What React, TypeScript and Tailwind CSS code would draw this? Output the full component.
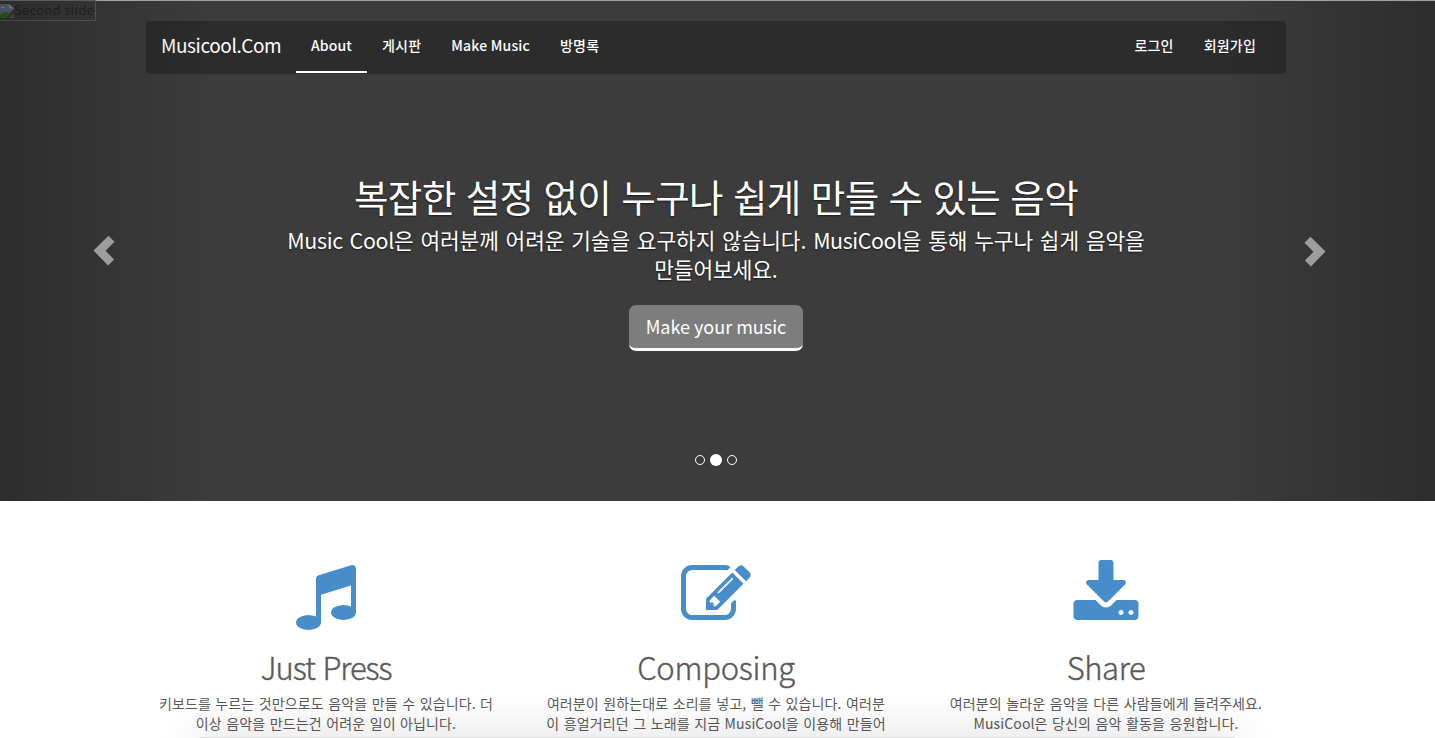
import type { ReactNode } from 'react';

const MUSIC =
  'M1664 224v1120q0 50-34 89t-86 60.5-103.5 32-96.5 10.5-96.5-10.5-103.5-32-86-60.5-34-89 34-89 86-60.5 103.5-32 96.5-10.5q105 0 192 39v-537l-768 237v709q0 50-34 89t-86 60.5-103.5 32-96.5 10.5-96.5-10.5-103.5-32-86-60.5-34-89 34-89 86-60.5 103.5-32 96.5-10.5q105 0 192 39v-967q0-31 19-56.5t49-35.5l832-256q12-4 28-4 40 0 68 28t28 68z';
const EDIT =
  'M888 1184l116-116-152-152-116 116v56h96v96h56zm440-720q-16-16-33 1l-350 350q-17 17-1 33t33-1l350-350q17-17 1-33zm80 594v190q0 119-84.5 203.5t-203.5 84.5h-832q-119 0-203.5-84.5t-84.5-203.5v-832q0-119 84.5-203.5t203.5-84.5h832q63 0 117 25 15 7 18 23 3 17-9 29l-49 49q-14 14-32 8-23-6-45-6h-832q-66 0-113 47t-47 113v832q0 66 47 113t113 47h832q66 0 113-47t47-113v-126q0-13 9-22l64-64q15-15 35-7t20 29zm-96-738l288 288-672 672h-288v-288zm444 132l-92 92-288-288 92-92q28-28 68-28t68 28l152 152q28 28 28 68t-28 68z';
const DOWNLOAD =
  'M1344 1344q0-26-19-45t-45-19-45 19-19 45 19 45 45 19 45-19 19-45zm256 0q0-26-19-45t-45-19-45 19-19 45 19 45 45 19 45-19 19-45zm128-224v320q0 40-28 68t-68 28h-1472q-40 0-68-28t-28-68v-320q0-40 28-68t68-28h465l135 136q58 56 136 56t136-56l136-136h464q40 0 68 28t28 68zm-325-569q17 41-14 70l-448 448q-18 19-45 19t-45-19l-448-448q-31-29-14-70 17-39 59-39h256v-448q0-26 19-45t45-19h256q26 0 45 19t19 45v448h256q42 0 59 39z';

function NavLink({ children, active = false }: { children: ReactNode; active?: boolean }) {
  return (
    <a
      className={
        active
          ? 'flex h-[52px] w-[71px] items-center border-b-2 border-white px-[15px] pb-px tracking-[0.1px]'
          : 'flex h-[52px] items-center border-b-2 border-transparent px-[15px] pb-px tracking-[0.2px]'
      }
    >
      {children}
    </a>
  );
}

function BrokenImage() {
  return (
    <div className="absolute left-[-1px] top-[-1px] flex h-[21px] w-[97px] items-center border border-[#5c5c5c] text-[13px] leading-[18px] text-[#262626]">
      <svg className="h-4 w-[14px] shrink-0" viewBox="0 0 14 16">
        <path d="M0 1h9l5 4.500L5.500 15H0z" fill="#626b84" />
        <path d="M9 1v4.500h5z" fill="#8a8e8d" />
        <path d="M0 12q5-5 9-1.500L5.500 15H0z" fill="#2f6a22" />
        <path d="M1 5q2-3 4 0z" fill="#a09e90" />
        <path d="M9 15l5-5v5z" fill="#3c6a34" />
      </svg>
      <span className="whitespace-nowrap pb-px tracking-[0.3px]">Second slide</span>
    </div>
  );
}

function Chevron({ flip = false }: { flip?: boolean }) {
  return (
    <svg
      className={flip ? 'h-[31px] w-[22px] -scale-x-100' : 'h-[31px] w-[22px]'}
      viewBox="0 0 22 31"
    >
      <path d="M15.5 0.8l6 6-9 9 8.6 8.6-6 6L0.5 15.5z" fill="#9d9d9d" />
    </svg>
  );
}

function Feature({
  icon,
  title,
  lines,
}: {
  icon: string;
  title: ReactNode;
  lines: string[];
}) {
  return (
    <section className="flex w-[390px] flex-col items-center text-[#5a5a5a]">
      <svg className="h-[70px] w-[70px] fill-[#468dc9]" viewBox="0 0 1792 1792">
        <path d={icon} />
      </svg>
      <h2 className="mt-[20px] text-[31px] font-light leading-[34px] [-webkit-text-stroke:0.4px_#5a5a5a]">
        {title}
      </h2>
      <div className="mt-[9px] text-center text-[14px] leading-5 tracking-[0.12px] [word-spacing:1.2px]">
        {lines.map((line) => (
          <p key={line} className="whitespace-nowrap">
            {line}
          </p>
        ))}
      </div>
    </section>
  );
}

export default function App() {
  return (
    <div className="relative h-[738px] w-[1435px] overflow-hidden bg-white font-['Noto_Sans_CJK_KR',sans-serif]">
      <header className="relative h-[501px] border-t border-[#a0a3a1] bg-[#3c3c3c]">
        <BrokenImage />
        <div className="flex w-[1432px] flex-col items-center pt-5">
          <nav className="flex h-[53px] w-[1140px] rounded bg-[#2c2c2c] text-[14px] font-medium text-white">
            <a className="flex h-[49px] w-[150px] items-center px-[15px] text-[19px] font-normal tracking-[-0.42px]">
              Musicool.Com
            </a>
            <NavLink active>About</NavLink>
            <NavLink>게시판</NavLink>
            <NavLink>Make Music</NavLink>
            <NavLink>방명록</NavLink>
            <div className="ml-auto flex pr-[15px]">
              <NavLink>로그인</NavLink>
              <NavLink>회원가입</NavLink>
            </div>
          </nav>
          <div className="mt-[101px] flex flex-col items-center text-center text-white [text-shadow:0_1px_2px_rgba(0,0,0,0.6)]">
            <h1 className="whitespace-nowrap text-[37.5px] leading-[42px] tracking-[-0.6px] [word-spacing:2.2px]">
              복잡한 설정 없이 누구나 쉽게 만들 수 있는 음악
            </h1>
            <p className="mt-[8px] whitespace-nowrap text-[21.4px] leading-[29px] tracking-[-0.08px] [word-spacing:2.1px]">
              <span className="tracking-[-0.3px]">Music Cool</span>은 여러분께 어려운 기술을 요구하지 않습니다.{' '}
              <span className="tracking-[-0.4px]">MusiCool</span>을 통해 누구나 쉽게 음악을
              <br />
              만들어보세요.
            </p>
            <button className="mt-[22px] h-[46px] w-[174px] rounded-[7px] border-b-[3px] border-white bg-[#7d7d7d] text-[18px] leading-[43px] [text-shadow:none]">
              Make your music
            </button>
          </div>
        </div>
        <div className="absolute inset-y-0 left-0 w-[215px] bg-linear-to-r from-black/25 to-transparent" />
        <div className="absolute inset-y-0 right-0 w-[215px] bg-linear-to-l from-black/25 to-transparent" />
        <div className="absolute left-[93px] top-[234px]">
          <Chevron />
        </div>
        <div className="absolute left-[1304px] top-[235px]">
          <Chevron flip />
        </div>
        <div className="absolute left-[695px] top-[453px] flex items-center gap-[5px]">
          <i className="h-[10px] w-[10px] rounded-full border border-white" />
          <i className="h-3 w-3 rounded-full bg-white" />
          <i className="h-[10px] w-[10px] rounded-full border border-white" />
        </div>
      </header>
      <main className="flex pl-[131px] pt-[59px]">
        <Feature
          icon={MUSIC}
          title={<span className="tracking-[-1.1px] [word-spacing:2px]">Just Press</span>}
          lines={['키보드를 누르는 것만으로도 음악을 만들 수 있습니다. 더', '이상 음악을 만드는건 어려운 일이 아닙니다.']}
        />
        <Feature
          icon={EDIT}
          title={<span className="tracking-[-0.3px]">Composing</span>}
          lines={['여러분이 원하는대로 소리를 넣고, 뺄 수 있습니다. 여러분', '이 흥얼거리던 그 노래를 지금 MusiCool을 이용해 만들어']}
        />
        <Feature
          icon={DOWNLOAD}
          title={<span className="tracking-[-0.4px]">Share</span>}
          lines={['여러분의 놀라운 음악을 다른 사람들에게 들려주세요.', 'MusiCool은 당신의 음악 활동을 응원합니다.']}
        />
      </main>
      <div className="pointer-events-none absolute left-[200px] top-[737px] h-5 w-[1035px] bg-[#dedede] shadow-[0_0_45px_rgba(0,0,0,0.2)]" />
    </div>
  );
}
